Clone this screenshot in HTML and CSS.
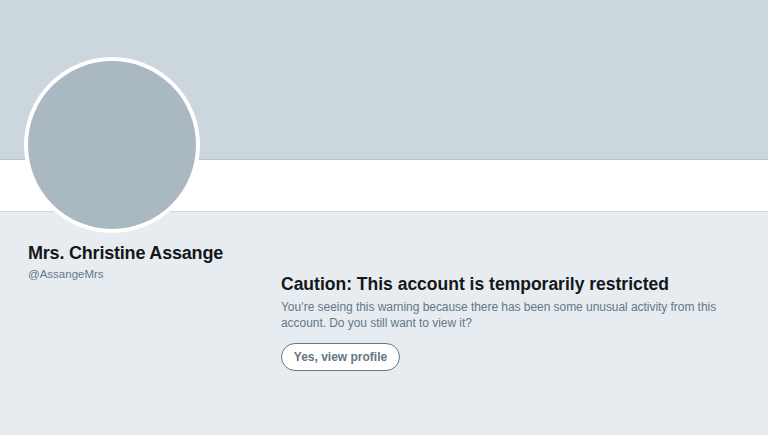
FILE: index.html
```html
<!DOCTYPE html>
<html lang="en">
<head>
<meta charset="utf-8">
<title>Mrs. Christine Assange (@AssangeMrs)</title>
<link rel="stylesheet" href="styles.css">
</head>
<body>
<div class="page">
  <header class="banner"></header>
  <nav class="navbar"></nav>
  <div class="avatar" aria-hidden="true"></div>
  <main class="main">
    <section class="profile">
      <h1 class="name">Mrs. Christine Assange</h1>
      <div class="handle">@AssangeMrs</div>
    </section>
    <section class="caution">
      <h2 class="caution-title">Caution: This account is temporarily restricted</h2>
      <p class="caution-text">You’re seeing this warning because there has been some unusual activity from this account. Do you still want to view it?</p>
      <button class="view-btn" type="button">Yes, view profile</button>
    </section>
  </main>
</div>
</body>
</html>
```

FILE: styles.css
```css
* { box-sizing: border-box; }
html, body { margin: 0; padding: 0; }
body {
  width: 768px;
  height: 435px;
  overflow: hidden;
  background: #e6ecf0;
  font-family: "Liberation Sans", Arial, Helvetica, sans-serif;
  color: #14171a;
}
.page { position: relative; height: 435px; }
.banner {
  height: 160px;
  background: #ccd6dd;
  border-bottom: 1px solid #b8c3ca;
}
.navbar {
  height: 52px;
  background: #ffffff;
  border-bottom: 1px solid #cfd6dc;
}
.avatar {
  position: absolute;
  left: 24px;
  top: 57px;
  width: 176px;
  height: 176px;
  border-radius: 50%;
  background: #aab8c2;
  border: 4px solid #ffffff;
}
.main {
  display: grid;
  grid-template-columns: 281px 1fr;
}
.profile { padding: 30px 0 0 28px; }
.name {
  margin: 0;
  font-size: 18px;
  line-height: 22px;
  font-weight: 700;
  letter-spacing: -0.2px;
  color: #14171a;
}
.handle {
  margin-top: 3px;
  font-size: 11.5px;
  line-height: 15px;
  color: #657786;
}
.caution { padding-top: 61px; }
.caution-title {
  margin: 0;
  font-size: 17.5px;
  line-height: 22px;
  font-weight: 700;
  color: #14171a;
}
.caution-text {
  margin: 4px 0 0;
  width: 450px;
  font-size: 12px;
  line-height: 16px;
  letter-spacing: -0.05px;
  color: #657786;
}
.view-btn {
  display: block;
  margin-top: 12px;
  height: 28px;
  width: 119px;
  padding: 0;
  border: 1px solid #657786;
  border-radius: 14px;
  background: #ffffff;
  font-family: "Liberation Sans", Arial, Helvetica, sans-serif;
  font-size: 12px;
  font-weight: 700;
  color: #657786;
}
```
